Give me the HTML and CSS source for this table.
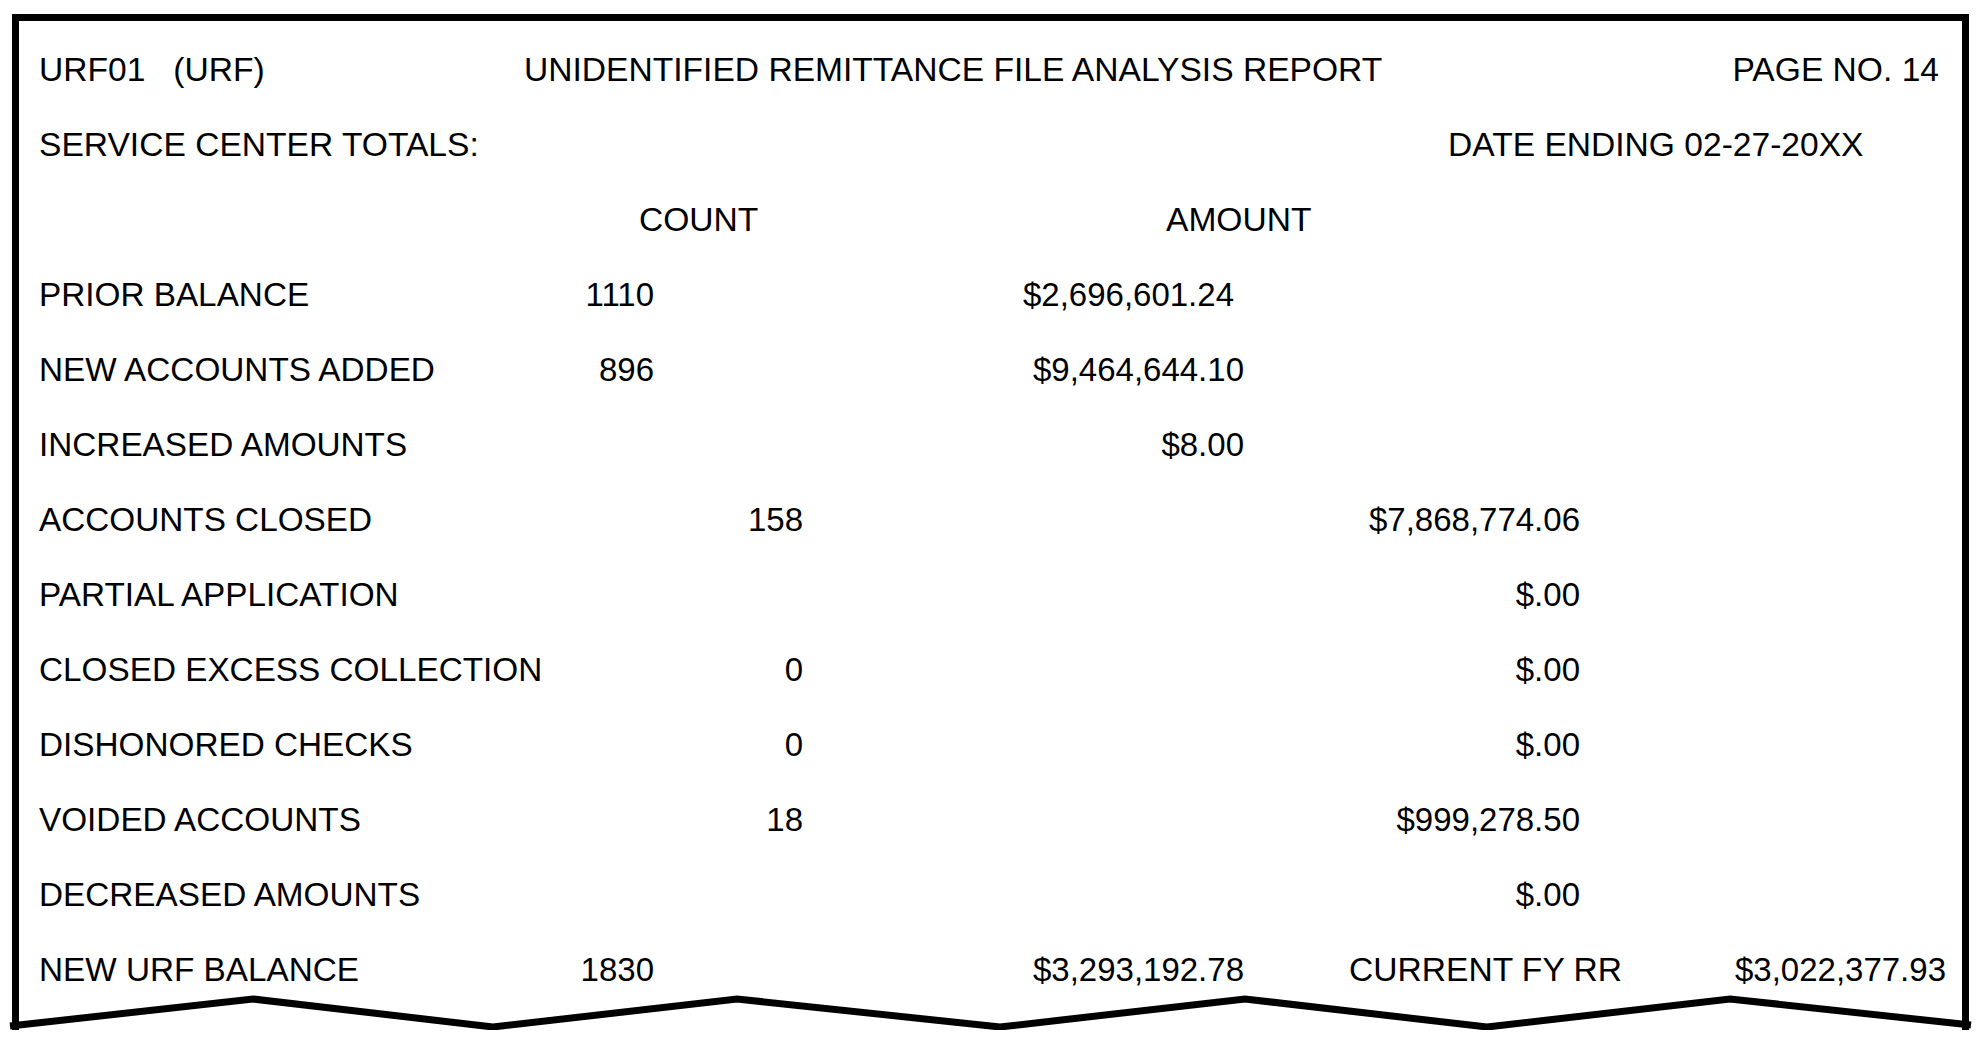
FILE: index.html
```html
<!DOCTYPE html>
<html lang="en">
<head>
<meta charset="utf-8">
<title>URF01 Unidentified Remittance File Analysis Report</title>
<link rel="stylesheet" href="styles.css">
</head>
<body>
<div class="sheet">
  <div class="rows">
    <div class="row head">
      <span class="pre">URF01   (URF)</span>
      <span>UNIDENTIFIED REMITTANCE FILE ANALYSIS REPORT</span>
      <span class="page">PAGE NO. 14</span>
    </div>
    <div class="row sub">
      <span>SERVICE CENTER TOTALS:</span>
      <span>DATE ENDING 02-27-20XX</span>
    </div>
    <div class="row colhead">
      <span class="c-count">COUNT</span>
      <span class="c-amount">AMOUNT</span>
    </div>
    <div class="row data">
      <span class="lbl">PRIOR BALANCE</span>
      <span class="cnt-a">1110</span>
      <span class="amt-a shift">$2,696,601.24</span>
    </div>
    <div class="row data">
      <span class="lbl">NEW ACCOUNTS ADDED</span>
      <span class="cnt-a">896</span>
      <span class="amt-a">$9,464,644.10</span>
    </div>
    <div class="row data">
      <span class="lbl">INCREASED AMOUNTS</span>
      <span class="amt-a">$8.00</span>
    </div>
    <div class="row data">
      <span class="lbl">ACCOUNTS CLOSED</span>
      <span class="cnt-b">158</span>
      <span class="amt-b">$7,868,774.06</span>
    </div>
    <div class="row data">
      <span class="lbl">PARTIAL APPLICATION</span>
      <span class="amt-b">$.00</span>
    </div>
    <div class="row data">
      <span class="lbl">CLOSED EXCESS COLLECTION</span>
      <span class="cnt-b">0</span>
      <span class="amt-b">$.00</span>
    </div>
    <div class="row data">
      <span class="lbl">DISHONORED CHECKS</span>
      <span class="cnt-b">0</span>
      <span class="amt-b">$.00</span>
    </div>
    <div class="row data">
      <span class="lbl">VOIDED ACCOUNTS</span>
      <span class="cnt-b">18</span>
      <span class="amt-b">$999,278.50</span>
    </div>
    <div class="row data">
      <span class="lbl">DECREASED AMOUNTS</span>
      <span class="amt-b">$.00</span>
    </div>
    <div class="row data">
      <span class="lbl">NEW URF BALANCE</span>
      <span class="cnt-a">1830</span>
      <span class="amt-a">$3,293,192.78</span>
      <span class="fy">CURRENT FY RR</span>
      <span class="fy-amt">$3,022,377.93</span>
    </div>
  </div>
  <svg class="torn" viewBox="19 990 1943 40" width="1943" height="40" aria-hidden="true">
    <polyline points="10,1026 253,999 493,1027 737,999 1000,1027 1245,999 1487,1027 1730,999 1971,1025" fill="none" stroke="#000" stroke-width="7" stroke-linejoin="miter"/>
  </svg>
</div>
</body>
</html>
```

FILE: styles.css
```css
html, body {
  margin: 0;
  padding: 0;
  background: #fff;
}

body {
  font-family: "Liberation Sans", Arial, sans-serif;
  font-size: 33.6px;
  color: #000;
}

.sheet {
  box-sizing: border-box;
  width: 1957px;
  margin: 14px 0 0 12px;
  border: 7px solid #000;
  border-bottom: none;
}

.rows {
  padding: 11px 16px 0 20px;
}

.row {
  display: grid;
  height: 75px;
  line-height: 75px;
  white-space: nowrap;
}

.pre {
  white-space: pre;
}

.head {
  grid-template-columns: 485px 1fr auto;
}

.head .page {
  margin-right: 7px;
}

.sub {
  grid-template-columns: 1409px 1fr;
}

.colhead {
  grid-template-columns: 600px 527px 1fr;
}

.colhead .c-count {
  grid-column: 2;
}

.colhead .c-amount {
  grid-column: 3;
}

.data {
  grid-template-columns: 501px 114px 149px 441px 105px 231px 1fr;
}

.lbl {
  grid-column: 1;
  grid-row: 1;
  font-size: 33.3px;
}

.cnt-a,
.cnt-b,
.amt-a,
.amt-b,
.fy-amt {
  font-size: 33px;
}

.cnt-a {
  grid-column: 2;
  grid-row: 1;
  justify-self: end;
}

.cnt-b {
  grid-column: 3;
  grid-row: 1;
  justify-self: end;
}

.amt-a {
  grid-column: 4;
  grid-row: 1;
  justify-self: end;
}

.amt-a.shift {
  margin-right: 10px;
}

.amt-b {
  grid-column: 5 / 7;
  grid-row: 1;
  justify-self: end;
}

.fy {
  grid-column: 6;
  grid-row: 1;
  justify-self: start;
}

.fy-amt {
  grid-column: 7;
  grid-row: 1;
  justify-self: end;
}

.torn {
  display: block;
  margin-top: -17px;
  overflow: visible;
}
```
